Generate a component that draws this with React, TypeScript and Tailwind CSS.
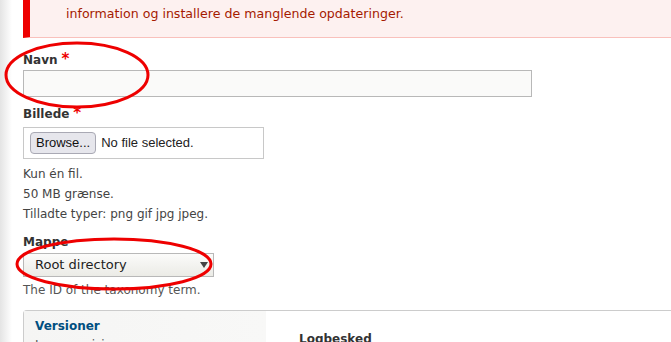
const Required = () => <span className="text-[#e00] ml-[4px] text-[15px] leading-none">*</span>;

const App = () => {
  return (
    <div className="relative h-[342px] overflow-hidden bg-[linear-gradient(to_right,#e4e4e4,#ffffff_12px)] font-['DejaVu_Sans',sans-serif] text-[#333]">
      <div className="pl-[23px]">
        {/* error message */}
        <div className="-mt-[24px] h-[62px] border-l-[7px] border-b border-l-[#e00] border-b-[#f9c1bc] bg-[#fdf1f0] pl-[36px] pt-[5px] text-[12.6px] leading-[22px] text-[#a51b00] whitespace-nowrap">
          <p>Der er sikkerhedsopdateringer tilgængelige, se siden tilgængelige opdateringer for mere</p>
          <p>information og installere de manglende opdateringer.</p>
        </div>

        {/* Navn */}
        <div className="mt-[14px]">
          <label className="flex items-start text-[12px] font-bold leading-[16px] text-[#333]">
            Navn
            <Required />
          </label>
          <input className="mt-[2px] block h-[27px] w-[509px] border border-[#b8b8b8] bg-[#fafaf9] outline-none" />
        </div>

        {/* Billede */}
        <div className="mt-[9px]">
          <label className="flex items-start text-[12px] font-bold leading-[16px] text-[#333]">
            Billede
            <Required />
          </label>
          <div className="mt-[5px] flex h-[32px] w-[241px] items-center border border-[#c8c8c8] bg-white pl-[6px]">
            <span className="flex h-[22px] items-center rounded-[4px] border border-[#a9a9b4] bg-[#e6e6ec] px-[5px] font-['Liberation_Sans',sans-serif] text-[13px] text-[#111]">
              Browse...
            </span>
            <span className="ml-[5px] font-['Liberation_Sans',sans-serif] text-[13px] text-[#222]">No file selected.</span>
          </div>
          <div className="mt-[5px] text-[12px] leading-[20px] text-[#444]">
            <p>Kun én fil.</p>
            <p>50 MB grænse.</p>
            <p>Tilladte typer: png gif jpg jpeg.</p>
          </div>
        </div>

        {/* Mappe */}
        <div className="mt-[10px]">
          <label className="block text-[12px] font-bold leading-[16px] text-[#333]">Mappe</label>
          <div className="mt-[3px] flex h-[24px] w-[191px] items-center justify-between border border-[#b8b8b8] bg-[linear-gradient(#fbfbfa,#ebebe6)] pl-[11px] pr-[5px]">
            <span className="text-[13px] text-[#222]">Root directory</span>
            <svg width="8" height="6" viewBox="0 0 8 6">
              <path d="M0 0h8L4 6z" fill="#444" />
            </svg>
          </div>
          <p className="mt-[5px] text-[12px] leading-[16px] text-[#555]">The ID of the taxonomy term.</p>
        </div>

        {/* Versioner panel */}
        <div className="mt-[12px] flex h-[60px] rounded-tl-[4px] border border-r-0 border-[#ccc]">
          <div className="w-[242px] bg-[linear-gradient(to_right,#f5f5f4,#f8f8f7)] pl-[11px] pt-[7px]">
            <p className="text-[12px] font-bold leading-[16px] text-[#004f80]">Versioner</p>
            <p className="mt-[3px] text-[12px] leading-[16px] text-[#555]">Ingen revisioner</p>
          </div>
          <div className="pl-[33px] pt-[20px]">
            <p className="text-[12px] font-bold leading-[16px] text-[#333]">Logbesked</p>
          </div>
        </div>
      </div>

      {/* annotation ellipses */}
      <svg className="pointer-events-none absolute left-0 top-0" width="671" height="342">
        <ellipse cx="77" cy="75" rx="71" ry="32" fill="none" stroke="#ee0000" strokeWidth="3" />
        <ellipse cx="114" cy="264" rx="97" ry="25" fill="none" stroke="#ee0000" strokeWidth="3" />
      </svg>
    </div>
  );
};

export default App;
